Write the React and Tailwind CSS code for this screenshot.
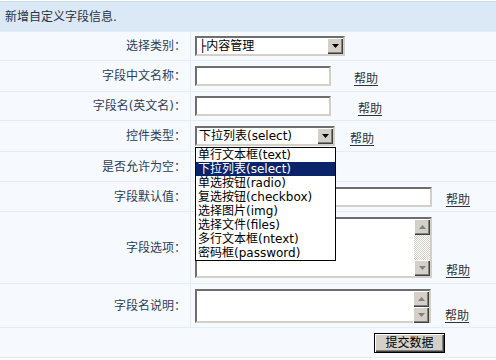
import React from 'react';

const font = { fontFamily: '"DejaVu Sans", "Noto Sans CJK SC", sans-serif' };

const sunken =
  'border-2 border-t-[#6e6e6e] border-l-[#6e6e6e] border-r-[#d4d0c8] border-b-[#d4d0c8] bg-white';
const raised =
  'bg-[#d4d0c8] shadow-[inset_1px_1px_#ffffff,inset_-1px_-1px_#404040,inset_-2px_-2px_#808080]';

function Arrow({ up, color = '#000' }) {
  return (
    <svg width="7" height="4" viewBox="0 0 7 4">
      {up ? <path d="M3.5 0 L7 4 L0 4 Z" fill={color} /> : <path d="M0 0 L7 0 L3.5 4 Z" fill={color} />}
    </svg>
  );
}

function ScrollBtn({ up }) {
  return (
    <div className={`w-[16px] h-[16px] shrink-0 flex items-center justify-center ${raised}`}>
      <Arrow up={up} color="#808080" />
    </div>
  );
}

function Help({ className = '' }) {
  return (
    <a href="#" className={`text-[12px] leading-[14px] text-[#333] underline underline-offset-2 ${className}`}>
      帮助
    </a>
  );
}

function Row({ label, h, children }) {
  return (
    <div className={`flex border-b border-[#e2edf8] bg-[#f6faff] ${h}`}>
      <div className="w-[191px] shrink-0 border-r border-[#e2edf8] flex items-center justify-end pr-1 text-[12px] text-[#2f4058]">
        {label}
      </div>
      <div className="flex-1 flex items-center pl-1">{children}</div>
    </div>
  );
}

const options = [
  '单行文本框(text)',
  '下拉列表(select)',
  '单选按钮(radio)',
  '复选按钮(checkbox)',
  '选择图片(img)',
  '选择文件(files)',
  '多行文本框(ntext)',
  '密码框(password)',
];

function Select({ value, width, children }) {
  return (
    <div className={`relative h-[20px] ${width} flex ${sunken}`}>
      <div className="flex-1 pl-[2px] text-[12px] leading-[16px] text-black">{value}</div>
      <div className={`w-[16px] h-[16px] flex items-center justify-center ${raised}`}>
        <Arrow />
      </div>
      {children}
    </div>
  );
}

export default function App() {
  return (
    <div className="w-[496px] h-[360px] bg-white overflow-hidden" style={font}>
      <div className="mt-px border-t border-[#c9dcef]">
        <div className="h-[30px] bg-[#dbe8f5] border-b border-[#e2edf8] flex items-center pl-[5px] text-[12px] text-[#2a3444]">
          新增自定义字段信息.
        </div>

        <Row label="选择类别：" h="h-[29px]">
          <Select value="├内容管理" width="w-[150px]" />
        </Row>

        <Row label="字段中文名称：" h="h-[31px]">
          <div className="flex items-end">
            <div className={`w-[136px] h-[20px] ${sunken}`} />
            <Help className="ml-[23px]" />
          </div>
        </Row>

        <Row label="字段名(英文名)：" h="h-[29px]">
          <div className="flex items-end">
            <div className={`w-[136px] h-[20px] ${sunken}`} />
            <Help className="ml-[27px]" />
          </div>
        </Row>

        <Row label="控件类型：" h="h-[31px]">
          <div className="flex items-end">
            <Select value="下拉列表(select)" width="w-[140px]">
              <div className="absolute z-10 left-[-2px] top-[19px] w-[141px] border border-black bg-white">
                {options.map((o, i) => (
                  <div
                    key={o}
                    className={`h-[14px] leading-[14px] pl-[2px] text-[12px] ${
                      i === 1 ? 'bg-[#0a246a] text-white' : 'text-black'
                    }`}
                  >
                    {o}
                  </div>
                ))}
              </div>
            </Select>
            <Help className="ml-[15px]" />
          </div>
        </Row>

        <Row label="是否允许为空：" h="h-[30px]" />

        <Row label="字段默认值：" h="h-[30px]">
          <div className="flex items-end">
            <div className={`w-[237px] h-[20px] ${sunken}`} />
            <Help className="ml-[14px]" />
          </div>
        </Row>

        <Row label="字段选项：" h="h-[72px]">
          <div className="flex items-end">
            <div className={`w-[237px] h-[61px] flex ${sunken}`}>
              <div className="flex-1" />
              <div className="w-[16px] flex flex-col">
                <ScrollBtn up />
                <div className="flex-1 bg-[repeating-conic-gradient(#d4d0c8_0_25%,#ffffff_0_50%)] bg-[length:2px_2px]" />
                <ScrollBtn />
              </div>
            </div>
            <Help className="ml-[14px]" />
          </div>
        </Row>

        <Row label="字段名说明：" h="h-[44px]">
          <div className="flex items-end">
            <div className={`w-[236px] h-[34px] flex ${sunken}`}>
              <div className="flex-1" />
              <div className="w-[16px] flex flex-col">
                <ScrollBtn up />
                <ScrollBtn />
              </div>
            </div>
            <Help className="ml-[14px]" />
          </div>
        </Row>

        <div className="h-[30px] border-b border-[#e2edf8] bg-[#f6faff] flex items-center justify-end pr-[51px]">
          <button
            className={`w-[71px] h-[20px] border border-black text-[12px] leading-[16px] text-black ${raised}`}
          >
            提交数据
          </button>
        </div>
      </div>
    </div>
  );
}
